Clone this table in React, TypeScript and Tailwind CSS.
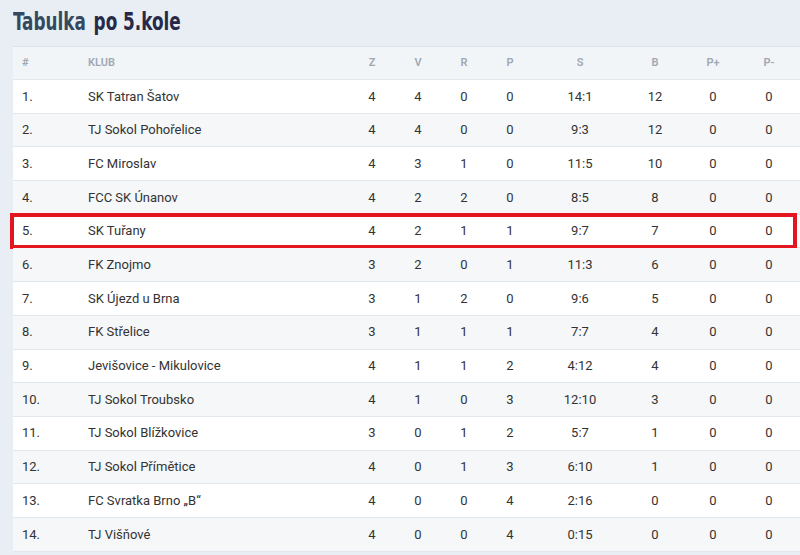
const rows: [string, string, number, number, number, number, string, number, number, number][] = [
  ["1.", "SK Tatran Šatov", 4, 4, 0, 0, "14:1", 12, 0, 0],
  ["2.", "TJ Sokol Pohořelice", 4, 4, 0, 0, "9:3", 12, 0, 0],
  ["3.", "FC Miroslav", 4, 3, 1, 0, "11:5", 10, 0, 0],
  ["4.", "FCC SK Únanov", 4, 2, 2, 0, "8:5", 8, 0, 0],
  ["5.", "SK Tuřany", 4, 2, 1, 1, "9:7", 7, 0, 0],
  ["6.", "FK Znojmo", 3, 2, 0, 1, "11:3", 6, 0, 0],
  ["7.", "SK Újezd u Brna", 3, 1, 2, 0, "9:6", 5, 0, 0],
  ["8.", "FK Střelice", 3, 1, 1, 1, "7:7", 4, 0, 0],
  ["9.", "Jevišovice - Mikulovice", 4, 1, 1, 2, "4:12", 4, 0, 0],
  ["10.", "TJ Sokol Troubsko", 4, 1, 0, 3, "12:10", 3, 0, 0],
  ["11.", "TJ Sokol Blížkovice", 3, 0, 1, 2, "5:7", 1, 0, 0],
  ["12.", "TJ Sokol Přímětice", 4, 0, 1, 3, "6:10", 1, 0, 0],
  ["13.", "FC Svratka Brno „B“", 4, 0, 0, 4, "2:16", 0, 0, 0],
  ["14.", "TJ Višňové", 4, 0, 0, 4, "0:15", 0, 0, 0],
];

function Cells({ cells }: { cells: (string | number)[] }) {
  return (
    <>
      <div className="w-[75px] shrink-0 pl-[9px]">{cells[0]}</div>
      <div className="w-[261px] shrink-0">{cells[1]}</div>
      <div className="w-[46px] shrink-0 text-center">{cells[2]}</div>
      <div className="w-[46px] shrink-0 text-center">{cells[3]}</div>
      <div className="w-[46px] shrink-0 text-center">{cells[4]}</div>
      <div className="w-[46px] shrink-0 text-center">{cells[5]}</div>
      <div className="w-[94px] shrink-0 text-center">{cells[6]}</div>
      <div className="w-[56px] shrink-0 text-center">{cells[7]}</div>
      <div className="w-[60px] shrink-0 text-center">{cells[8]}</div>
      <div className="w-[52px] shrink-0 text-center">{cells[9]}</div>
    </>
  );
}

export default function App() {
  return (
    <div className="h-[555px] w-[800px] overflow-hidden bg-[#e9eef4] pl-[13px] font-['Roboto',sans-serif]">
      {/* Title, condensed */}
      <h1 className="h-[46px] pt-[5px] font-['Liberation_Sans_Narrow','DejaVu_Sans_Condensed',sans-serif] text-[24px] font-bold leading-[34px]">
        <div className="flex origin-left scale-x-[0.78] gap-[10px]">
          <span className="text-[#34495e]">Tabulka</span>
          <span className="text-[#262a48]">po 5.kole</span>
        </div>
      </h1>

      <div className="w-[800px] border-t border-[#dde3ea]">
        <div className="flex h-[33px] items-center border-b border-[#e2e7ed] bg-[#f2f5f8] text-[11px] font-semibold text-[#a0a8b2]">
          <Cells cells={["#", "KLUB", "Z", "V", "R", "P", "S", "B", "P+", "P-"]} />
        </div>
        {rows.map((r, i) => (
          <div
            key={r[0]}
            className={
              "relative flex h-[33.7px] items-center border-b border-[#e2e7ed] text-[13px] text-[#333333] " +
              (i % 2 === 0 ? "bg-white" : "bg-[#f5f7f9]")
            }
          >
            <Cells cells={r} />
            {i === 4 && (
              <div className="pointer-events-none absolute -top-[2px] -bottom-[2px] -left-[3px] w-[787px] border-[4px] border-[#e3151e]" />
            )}
          </div>
        ))}
      </div>
    </div>
  );
}
